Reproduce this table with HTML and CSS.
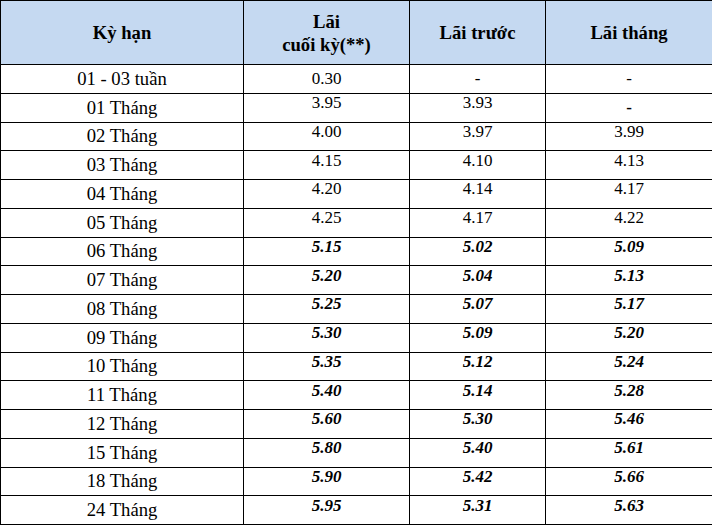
FILE: index.html
```html
<!DOCTYPE html>
<html lang="vi">
<head>
<meta charset="utf-8">
<title>Lãi suất</title>
<link rel="stylesheet" href="styles.css">
</head>
<body>
<table class="rates">
  <colgroup>
    <col class="c1"><col class="c2"><col class="c3"><col class="c4">
  </colgroup>
  <thead>
    <tr class="head">
      <th>Kỳ hạn</th>
      <th>Lãi<br>cuối kỳ(**)</th>
      <th>Lãi trước</th>
      <th>Lãi tháng</th>
    </tr>
  </thead>
  <tbody>
    <tr><td class="term">01 - 03 tuần</td><td class="num">0.30</td><td class="num">-</td><td class="num">-</td></tr>
    <tr><td class="term">01 Tháng</td><td class="num up">3.95</td><td class="num up">3.93</td><td class="num dash">-</td></tr>
    <tr><td class="term">02 Tháng</td><td class="num up">4.00</td><td class="num up">3.97</td><td class="num up">3.99</td></tr>
    <tr><td class="term">03 Tháng</td><td class="num up">4.15</td><td class="num up">4.10</td><td class="num up">4.13</td></tr>
    <tr><td class="term">04 Tháng</td><td class="num up">4.20</td><td class="num up">4.14</td><td class="num up">4.17</td></tr>
    <tr><td class="term">05 Tháng</td><td class="num up">4.25</td><td class="num up">4.17</td><td class="num up">4.22</td></tr>
    <tr><td class="term">06 Tháng</td><td class="num up hi">5.15</td><td class="num up hi">5.02</td><td class="num up hi">5.09</td></tr>
    <tr><td class="term">07 Tháng</td><td class="num up hi">5.20</td><td class="num up hi">5.04</td><td class="num up hi">5.13</td></tr>
    <tr><td class="term">08 Tháng</td><td class="num up hi">5.25</td><td class="num up hi">5.07</td><td class="num up hi">5.17</td></tr>
    <tr><td class="term">09 Tháng</td><td class="num up hi">5.30</td><td class="num up hi">5.09</td><td class="num up hi">5.20</td></tr>
    <tr><td class="term">10 Tháng</td><td class="num up hi">5.35</td><td class="num up hi">5.12</td><td class="num up hi">5.24</td></tr>
    <tr><td class="term">11 Tháng</td><td class="num up hi">5.40</td><td class="num up hi">5.14</td><td class="num up hi">5.28</td></tr>
    <tr><td class="term">12 Tháng</td><td class="num up hi">5.60</td><td class="num up hi">5.30</td><td class="num up hi">5.46</td></tr>
    <tr><td class="term">15 Tháng</td><td class="num up hi">5.80</td><td class="num up hi">5.40</td><td class="num up hi">5.61</td></tr>
    <tr><td class="term">18 Tháng</td><td class="num up hi">5.90</td><td class="num up hi">5.42</td><td class="num up hi">5.66</td></tr>
    <tr><td class="term">24 Tháng</td><td class="num up hi">5.95</td><td class="num up hi">5.31</td><td class="num up hi">5.63</td></tr>
  </tbody>
</table>
</body>
</html>
```
FILE: styles.css
```css
html, body {
  margin: 0;
  padding: 0;
  background: #ffffff;
}

body {
  font-family: "Liberation Serif", "Times New Roman", serif;
  color: #000000;
}

.rates {
  border-collapse: collapse;
  table-layout: fixed;
  width: 712px;
  border: 1px solid #000000;
}

.c1 { width: 243px; }
.c2 { width: 166px; }
.c3 { width: 136px; }
.c4 { width: 167px; }

.rates th,
.rates td {
  border: 1px solid #000000;
  padding: 0;
  text-align: center;
  vertical-align: middle;
}

.head {
  height: 64px;
  background: #c5d9f1;
}

.head th {
  font-size: 18.67px;
  font-weight: bold;
  line-height: 23px;
}

.rates tbody tr {
  height: 28.75px;
}

.term {
  font-size: 18.67px;
  line-height: 20px;
  padding-top: 2px;
}

.num {
  font-size: 17px;
  line-height: 18px;
}

.num.up {
  padding-bottom: 9px;
}

.num.hi {
  font-weight: bold;
  font-style: italic;
}

.num.dash {
  font-weight: bold;
  padding-top: 1px;
}
```
